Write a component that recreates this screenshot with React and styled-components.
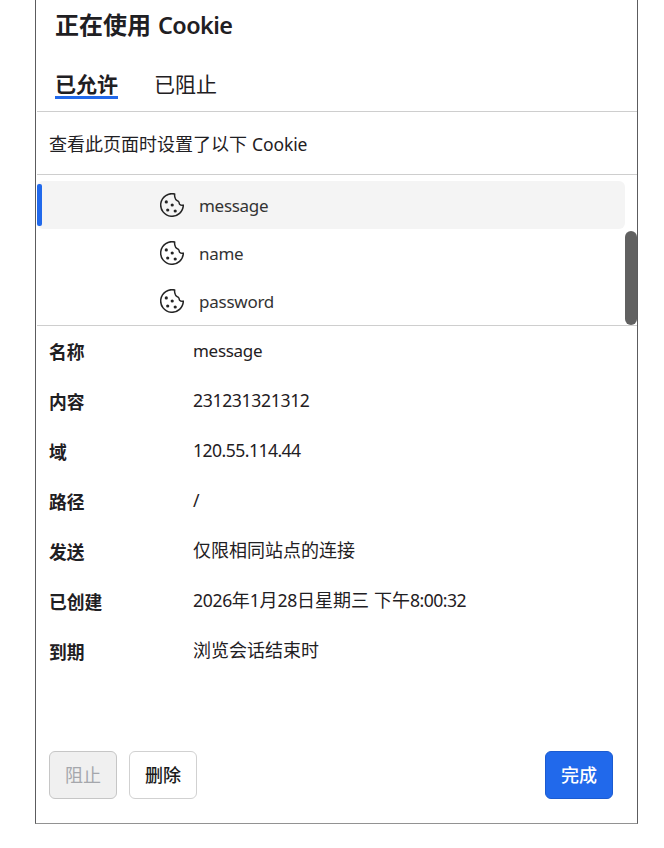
import React from 'react';
import styled, { createGlobalStyle } from 'styled-components';

const Global = createGlobalStyle`
  * { box-sizing: border-box; }
  body {
    margin: 0;
    background: #fff;
    color: #1f2023;
    font-family: "Noto Sans", "Noto Sans CJK SC", sans-serif;
    overflow: hidden;
  }
`;

const Dialog = styled.main`
  display: flex;
  flex-direction: column;
  width: 603px;
  height: 824px;
  margin-left: 35px;
  border: 1px solid #5c5c5e;
  border-top: 0;
  border-bottom-color: #929292;
  padding-left: 1px;
  background: #fff;
`;

const Header = styled.header`
  height: 112px;
  padding-left: 18px;
  border-bottom: 1px solid #cecece;
`;

const Title = styled.h1`
  margin: 0;
  height: 52px;
  font: 700 24px/48px "Noto Sans CJK SC", sans-serif;
  white-space: nowrap;
`;

const Latin = styled.span`
  font-family: "Noto Sans", sans-serif;
  font-size: ${(p) => p.$size || 17}px;
  font-weight: ${(p) => p.$weight || 400};
  letter-spacing: ${(p) => p.$spacing || 0}px;
  margin-left: ${(p) => p.$gap || 0}px;
`;

const Digits = styled(Latin).attrs({ $size: 17.6 })`
  letter-spacing: ${(p) => p.$spacing ?? -0.35}px;
`;

const Tabs = styled.nav`
  display: flex;
  gap: 36px;
  padding-top: 18px;
`;

const Tab = styled.button`
  height: 29px;
  padding: 0;
  border: 0;
  border-bottom: 3px solid ${(p) => (p.$active ? '#2169eb' : 'transparent')};
  background: none;
  color: inherit;
  font: ${(p) => (p.$active ? 700 : 400)} 21px/27px "Noto Sans CJK SC", sans-serif;
  white-space: nowrap;
`;

const Intro = styled.p`
  margin: 0;
  height: 63px;
  padding-left: 12px;
  border-bottom: 1px solid #cecece;
  font: 400 18px/62px "Noto Sans CJK SC", sans-serif;
  white-space: nowrap;
`;

const ListArea = styled.section`
  display: flex;
  height: 151px;
  padding-top: 6px;
  border-bottom: 1px solid #cecece;
`;

const List = styled.ul`
  width: 588px;
  margin: 0;
  padding: 0;
  list-style: none;
`;

const CookieRow = styled.li`
  display: flex;
  align-items: center;
  height: 48px;
  border-radius: 6px;
  background: ${(p) => (p.$selected ? '#f4f4f4' : 'transparent')};
  color: #333;
`;

const Marker = styled.span`
  width: 5px;
  height: 42px;
  margin-right: 118px;
  border-radius: 2px;
  background: ${(p) => (p.$selected ? '#2169eb' : 'transparent')};
`;

const CookieSvg = styled.svg`
  width: 24px;
  height: 24px;
  margin-right: 15px;
`;

const Thumb = styled.div`
  width: 12px;
  height: 94px;
  margin-top: 50px;
  border-radius: 6px;
  background: #616161;
`;

const Details = styled.dl`
  flex: 1;
  margin: 0;
  padding: 1px 0 0 12px;
`;

const Detail = styled.div`
  display: grid;
  grid-template-columns: 144px 1fr;
  height: 50px;
`;

const Label = styled.dt`
  font: 700 17.8px/49px "Noto Sans CJK SC", sans-serif;
`;

const Value = styled.dd`
  margin: 0;
  font: 400 18px/44px "Noto Sans CJK SC", sans-serif;
  white-space: nowrap;
`;

const Footer = styled.footer`
  display: flex;
  gap: 12px;
  padding: 0 24px 24px 12px;
`;

const Button = styled.button`
  width: 68px;
  height: 48px;
  padding: 0 0 2px;
  border: 1px solid ${(p) => (p.$kind === 'primary' ? '#1b5bd0' : p.$kind === 'disabled' ? '#c6c6c6' : '#d1d1d1')};
  border-radius: 6px;
  margin-left: ${(p) => (p.$kind === 'primary' ? 'auto' : '0')};
  background: ${(p) => (p.$kind === 'primary' ? '#2169eb' : p.$kind === 'disabled' ? '#f0f0f0' : '#fff')};
  color: ${(p) => (p.$kind === 'primary' ? '#fff' : p.$kind === 'disabled' ? '#a5a7ac' : '#1b1b1b')};
  font: ${(p) => (p.$kind === 'disabled' ? 400 : 500)} 18px/44px "Noto Sans CJK SC", sans-serif;
`;

function CookieIcon() {
  return (
    <CookieSvg viewBox="0 0 24 24" fill="none">
      <path
        d="M14.7 1A11.3 11.3 0 1 0 23.3 12.1C21.8 12.5 20.5 12.1 19.6 11.2C19 10.5 19.3 9.1 18.5 8.5C17.4 7.7 16.1 7.3 15.6 6.1C15.1 4.8 14.2 3.3 14.7 1Z"
        stroke="#242424"
        strokeWidth="1.5"
        strokeLinejoin="round"
      />
      <g fill="#242424">
        <circle cx="6.3" cy="8.9" r="1.6" />
        <circle cx="12.2" cy="12" r="1.6" />
        <circle cx="7.7" cy="17" r="1.6" />
        <circle cx="15.2" cy="18" r="1.6" />
      </g>
    </CookieSvg>
  );
}

const cookies = [
  { name: 'message', spacing: -0.3 },
  { name: 'name', spacing: -0.3 },
  { name: 'password', spacing: -0.25 },
];

const details = [
  ['名称', <Latin $spacing={-0.3}>message</Latin>],
  ['内容', <Digits>231231321312</Digits>],
  ['域', <Digits $spacing={-0.55}>120.55.114.44</Digits>],
  ['路径', <Digits>/</Digits>],
  ['发送', '仅限相同站点的连接'],
  ['已创建', (
    <>
      <Digits>2026</Digits>年<Digits>1</Digits>月<Digits>28</Digits>日星期三
      <Latin $gap={5}>{''}</Latin>下午<Digits $spacing={-0.55}>8:00:32</Digits>
    </>
  )],
  ['到期', '浏览会话结束时'],
];

export default function App() {
  return (
    <>
      <Global />
      <Dialog>
        <Header>
          <Title>正在使用<Latin $size={23.4} $weight={600} $spacing={-0.6} $gap={7}>Cookie</Latin></Title>
          <Tabs>
            <Tab $active>已允许</Tab>
            <Tab>已阻止</Tab>
          </Tabs>
        </Header>
        <Intro>查看此页面时设置了以下<Latin $size={17.5} $spacing={-0.1} $gap={5}>Cookie</Latin></Intro>
        <ListArea>
          <List>
            {cookies.map((cookie, i) => (
              <CookieRow key={cookie.name} $selected={i === 0}>
                <Marker $selected={i === 0} />
                <CookieIcon />
                <Latin $spacing={cookie.spacing}>{cookie.name}</Latin>
              </CookieRow>
            ))}
          </List>
          <Thumb />
        </ListArea>
        <Details>
          {details.map(([label, value]) => (
            <Detail key={label}>
              <Label>{label}</Label>
              <Value>{value}</Value>
            </Detail>
          ))}
        </Details>
        <Footer>
          <Button $kind="disabled" disabled>阻止</Button>
          <Button>删除</Button>
          <Button $kind="primary">完成</Button>
        </Footer>
      </Dialog>
    </>
  );
}
